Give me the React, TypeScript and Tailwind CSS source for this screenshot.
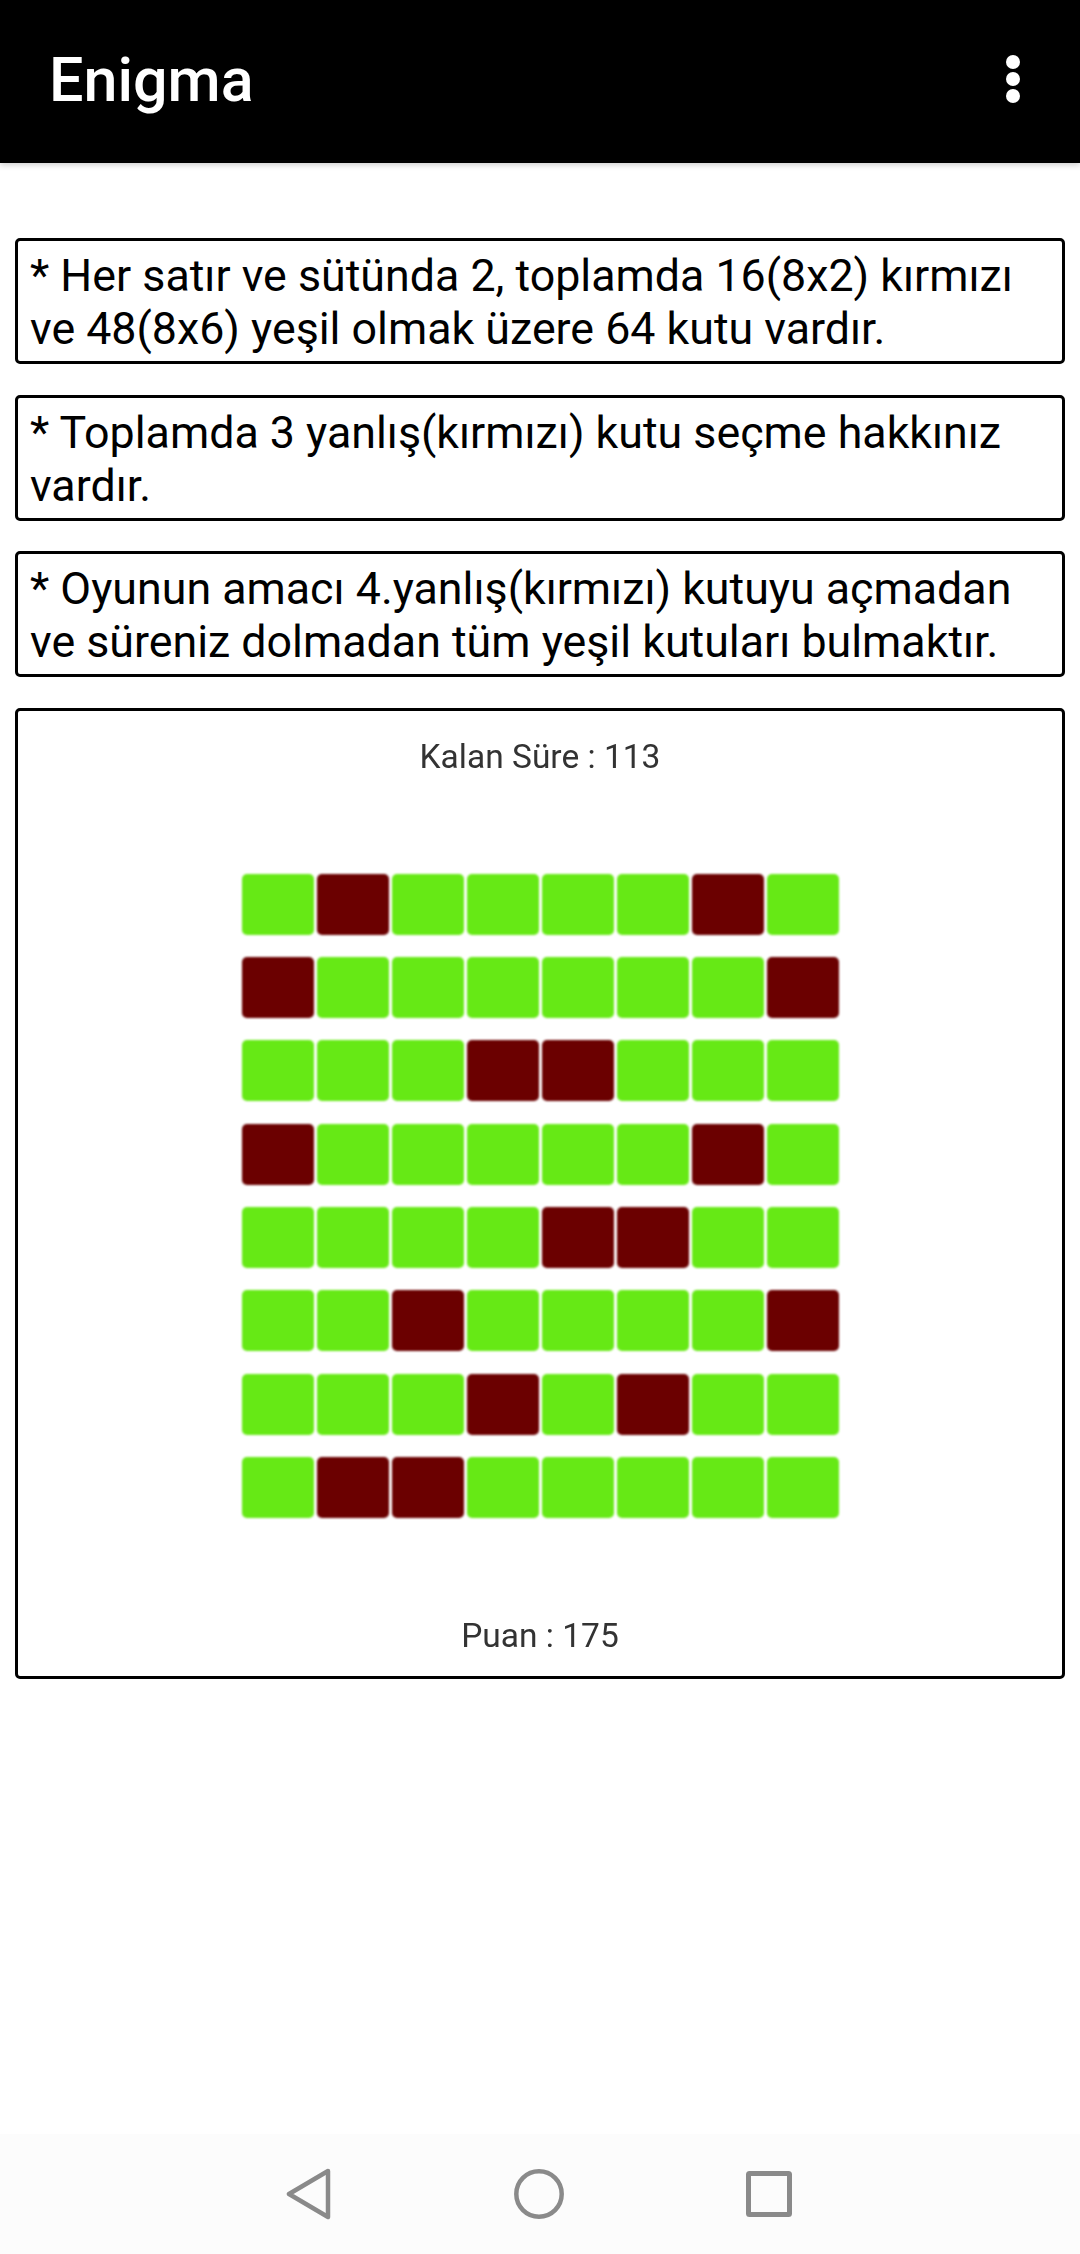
import React from 'react';

const notes = [
  '* Her satır ve sütünda 2, toplamda 16(8x2) kırmızı ve 48(8x6) yeşil olmak üzere 64 kutu vardır.',
  '* Toplamda 3 yanlış(kırmızı) kutu seçme hakkınız vardır.',
  '* Oyunun amacı 4.yanlış(kırmızı) kutuyu açmadan ve süreniz dolmadan tüm yeşil kutuları bulmaktır.',
];

// 1 = red box, 0 = green box
const board = [
  [0, 1, 0, 0, 0, 0, 1, 0],
  [1, 0, 0, 0, 0, 0, 0, 1],
  [0, 0, 0, 1, 1, 0, 0, 0],
  [1, 0, 0, 0, 0, 0, 1, 0],
  [0, 0, 0, 0, 1, 1, 0, 0],
  [0, 0, 1, 0, 0, 0, 0, 1],
  [0, 0, 0, 1, 0, 1, 0, 0],
  [0, 1, 1, 0, 0, 0, 0, 0],
];

const App: React.FC = () => {
  return (
    <div className="h-[2254px] w-[1080px] flex flex-col bg-white overflow-hidden font-['Roboto',sans-serif]">
      {/* App bar */}
      <header className="h-[163px] shrink-0 bg-black flex items-center justify-between pl-[49px] pr-[60px] shadow-[0_2px_6px_rgba(0,0,0,0.2)]">
        <h1 className="text-white text-[61px] leading-none font-medium -mt-[3px]">Enigma</h1>
        <div className="flex flex-col gap-[3px] -mt-[5px]">
          <div className="w-[14px] h-[14px] rounded-full bg-white" />
          <div className="w-[14px] h-[14px] rounded-full bg-white" />
          <div className="w-[14px] h-[14px] rounded-full bg-white" />
        </div>
      </header>

      <main className="flex-1 px-[15px] pt-[75px] flex flex-col gap-[30.5px]">
        {notes.map(note => (
          <p key={note} className="h-[126px] border-[3px] border-black rounded-[5px] pl-[12px] pr-[26px] pt-[8px] text-[44.75px] leading-[53px] text-black">
            {note}
          </p>
        ))}

        <section className="h-[971px] border-[3px] border-black rounded-[5px] flex flex-col items-center">
          <div className="mt-[26px] text-[33.5px] leading-[40px] text-[#333] blur-[0.6px]">Kalan Süre : 113</div>
          <div className="mt-[97px] flex flex-col gap-[22.4px]">
            {board.map((row, r) => (
              <div key={r} className="flex gap-[3px]">
                {row.map((cell, c) => (
                  <div
                    key={c}
                    className={`w-[72px] h-[61px] rounded-[5px] blur-[0.8px] ${cell ? 'bg-[#6b0000]' : 'bg-[#66e915]'}`}
                  />
                ))}
              </div>
            ))}
          </div>
          <div className="mt-[98px] text-[33.5px] leading-[40px] text-[#333] blur-[0.6px]">Puan : 175</div>
        </section>
      </main>

      {/* Navigation bar */}
      <nav className="h-[120px] shrink-0 bg-[#fcfcfc] flex items-center pl-[286px] gap-[182px]">
        <svg width="46" height="52" viewBox="0 0 46 52" fill="none" stroke="#8a8a8a" strokeWidth="4.5" strokeLinejoin="round">
          <path d="M42 3 L3 26 L42 49 Z" />
        </svg>
        <svg width="50" height="50" viewBox="0 0 50 50" fill="none" stroke="#8a8a8a" strokeWidth="4.5">
          <circle cx="25" cy="25" r="22.7" />
        </svg>
        <svg width="46" height="46" viewBox="0 0 46 46" fill="none" stroke="#8a8a8a" strokeWidth="5" strokeLinejoin="round">
          <rect x="2.5" y="2.5" width="41" height="41" rx="1" />
        </svg>
      </nav>
    </div>
  );
};

export default App;
